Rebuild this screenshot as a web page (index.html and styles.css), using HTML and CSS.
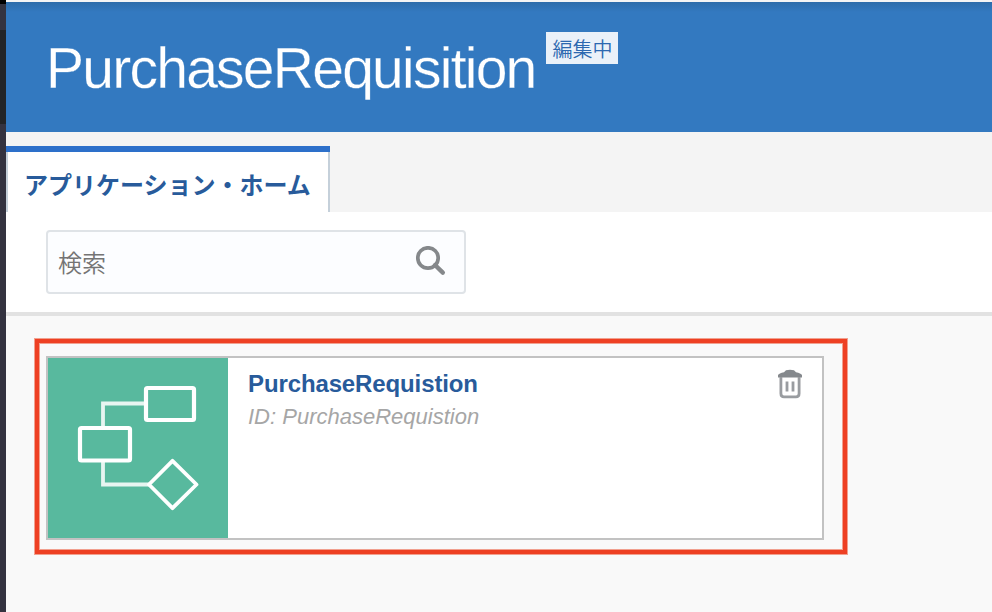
FILE: index.html
```html
<!DOCTYPE html>
<html lang="ja">
<head>
<meta charset="utf-8">
<title>PurchaseRequisition</title>
<link rel="stylesheet" href="styles.css">
</head>
<body>
<div class="edge"></div>
<div class="app">
  <header class="header">
    <h1 class="title">PurchaseRequisition</h1>
    <span class="badge">編集中</span>
  </header>
  <nav class="tabs"><a class="tab">アプリケーション・ホーム</a></nav>
  <div class="toolbar">
    <div class="search">
      <span class="placeholder">検索</span>
      <svg class="search-icon" width="32" height="32" viewBox="0 0 32 32" fill="none" stroke="#85888b">
        <circle cx="13" cy="12" r="10.2" stroke-width="3.7"/>
        <path d="M20 19 27.8 26.6" stroke-width="4.4" stroke-linecap="round"/>
      </svg>
    </div>
  </div>
  <main class="content">
    <div class="highlight">
      <article class="card">
        <svg class="thumb" width="180" height="180" viewBox="0 0 180 180" fill="none" stroke="#fff">
          <path d="M98 45.5H55V70M55 104V126.5H101" stroke-width="3.8" stroke-opacity=".86"/>
          <rect x="98" y="30" width="48" height="32" rx="1.5" stroke-width="4.2"/>
          <rect x="32" y="70" width="50" height="32.5" rx="1.5" stroke-width="4.2"/>
          <path d="M124.5 102.8 148.5 126.5 124.5 150.2 101 126.5Z" stroke-width="3.8" stroke-linejoin="round"/>
        </svg>
        <div class="info">
          <h2 class="name">PurchaseRequistion</h2>
          <p class="id">ID: PurchaseRequistion</p>
        </div>
        <svg class="trash" width="26" height="30" viewBox="0 0 26 30">
          <path d="M1 8.6V6Q2 4.2 7 3.2L9 1.2Q13 .2 17 1.2L19 3.2Q24 4.2 25 6V8.6Z" fill="#85898d"/>
          <path d="M3.9 8V24.5Q3.9 27.8 7 27.8H19Q22.1 27.8 22.1 24.5V8" fill="none" stroke="#999ca0" stroke-width="2.8"/>
          <path d="M10 12.5V22.5M16 12.5V22.5" stroke="#999ca0" stroke-width="2.8"/>
        </svg>
      </article>
    </div>
  </main>
</div>
</body>
</html>
```
FILE: styles.css
```css
* { box-sizing: border-box; }
body {
  margin: 0;
  height: 612px;
  display: flex;
  overflow: hidden;
  font-family: "Liberation Sans", "Noto Sans CJK JP", sans-serif;
}
.edge {
  width: 6px;
  background: linear-gradient(#000 4px, #343340 4px 30px, #232426 30px 124px, #343340 124px);
}
.app {
  flex: 1;
  display: flex;
  flex-direction: column;
  background: #f9f9f9;
}
.header {
  height: 132px;
  border-top: 2px solid #f4f4f4;
  padding-left: 40px;
  display: flex;
  align-items: flex-start;
  background: linear-gradient(#2d6caa, #3379c0 10px) padding-box;
}
.title {
  width: 500px;
  margin: 33px 0 0;
  font-size: 57px;
  line-height: 66px;
  font-weight: 400;
  letter-spacing: -1.75px;
  white-space: nowrap;
  color: #fff;
  -webkit-text-stroke: .3px #3379c0;
}
.badge {
  width: 72px;
  height: 32px;
  margin-top: 30px;
  padding-left: 1px;
  text-align: center;
  font-family: "Noto Sans CJK JP", sans-serif;
  font-size: 20px;
  font-weight: 350;
  line-height: 33px;
  color: #2c68b0;
  background: #eaf1f9;
}
.tabs {
  height: 80px;
  padding-top: 14px;
  background: #f4f4f4;
}
.tab {
  display: block;
  width: 324px;
  height: 66px;
  padding-left: 16px;
  border: 2px solid #c5d0da;
  border-top: 6px solid #2d70ca;
  border-bottom: 0;
  border-image: linear-gradient(#2d70ca 6px, #c5d0da 6px) 6 2 0 2;
  background: #fff;
  font-family: "Noto Sans CJK JP", sans-serif;
  font-size: 24px;
  line-height: 63px;
  font-weight: 700;
  color: #285b9b;
  white-space: nowrap;
}
.toolbar {
  height: 104px;
  padding: 18px 40px 0;
  background: #fff;
  border-bottom: 4px solid #e2e2e2;
}
.search {
  width: 420px;
  height: 64px;
  padding: 0 17px 0 10px;
  border: 2px solid #dfe3e7;
  border-radius: 4px;
  background: #fcfdff;
  display: flex;
  align-items: center;
  justify-content: space-between;
}
.placeholder {
  font-family: "Noto Sans CJK JP", sans-serif;
  font-size: 24px;
  font-weight: 350;
  line-height: 60px;
  color: #747474;
}
.content { padding: 23px 0 0 29px; }
.highlight {
  width: 812px;
  height: 215px;
  padding: 13px 19px 10px 7px;
  border: 4px solid #ee4023;
  box-shadow: 0 0 0 1px #f1a08f, inset 0 0 0 1px #f1a08f;
}
.card {
  width: 778px;
  height: 184px;
  display: flex;
  border: 2px solid #c2c2c2;
  background: #fff;
}
.thumb { background: #58b99e; }
.info { flex: 1; padding: 12px 0 0 20px; }
.name {
  margin: 0;
  font-size: 24px;
  line-height: 28px;
  font-weight: 700;
  letter-spacing: -.12px;
  color: #285b9b;
}
.id {
  margin: 6px 0 0;
  font-size: 22px;
  line-height: 26px;
  font-style: italic;
  color: #a6a6a6;
}
.trash { margin: 11px 19px 0 0; }
```
